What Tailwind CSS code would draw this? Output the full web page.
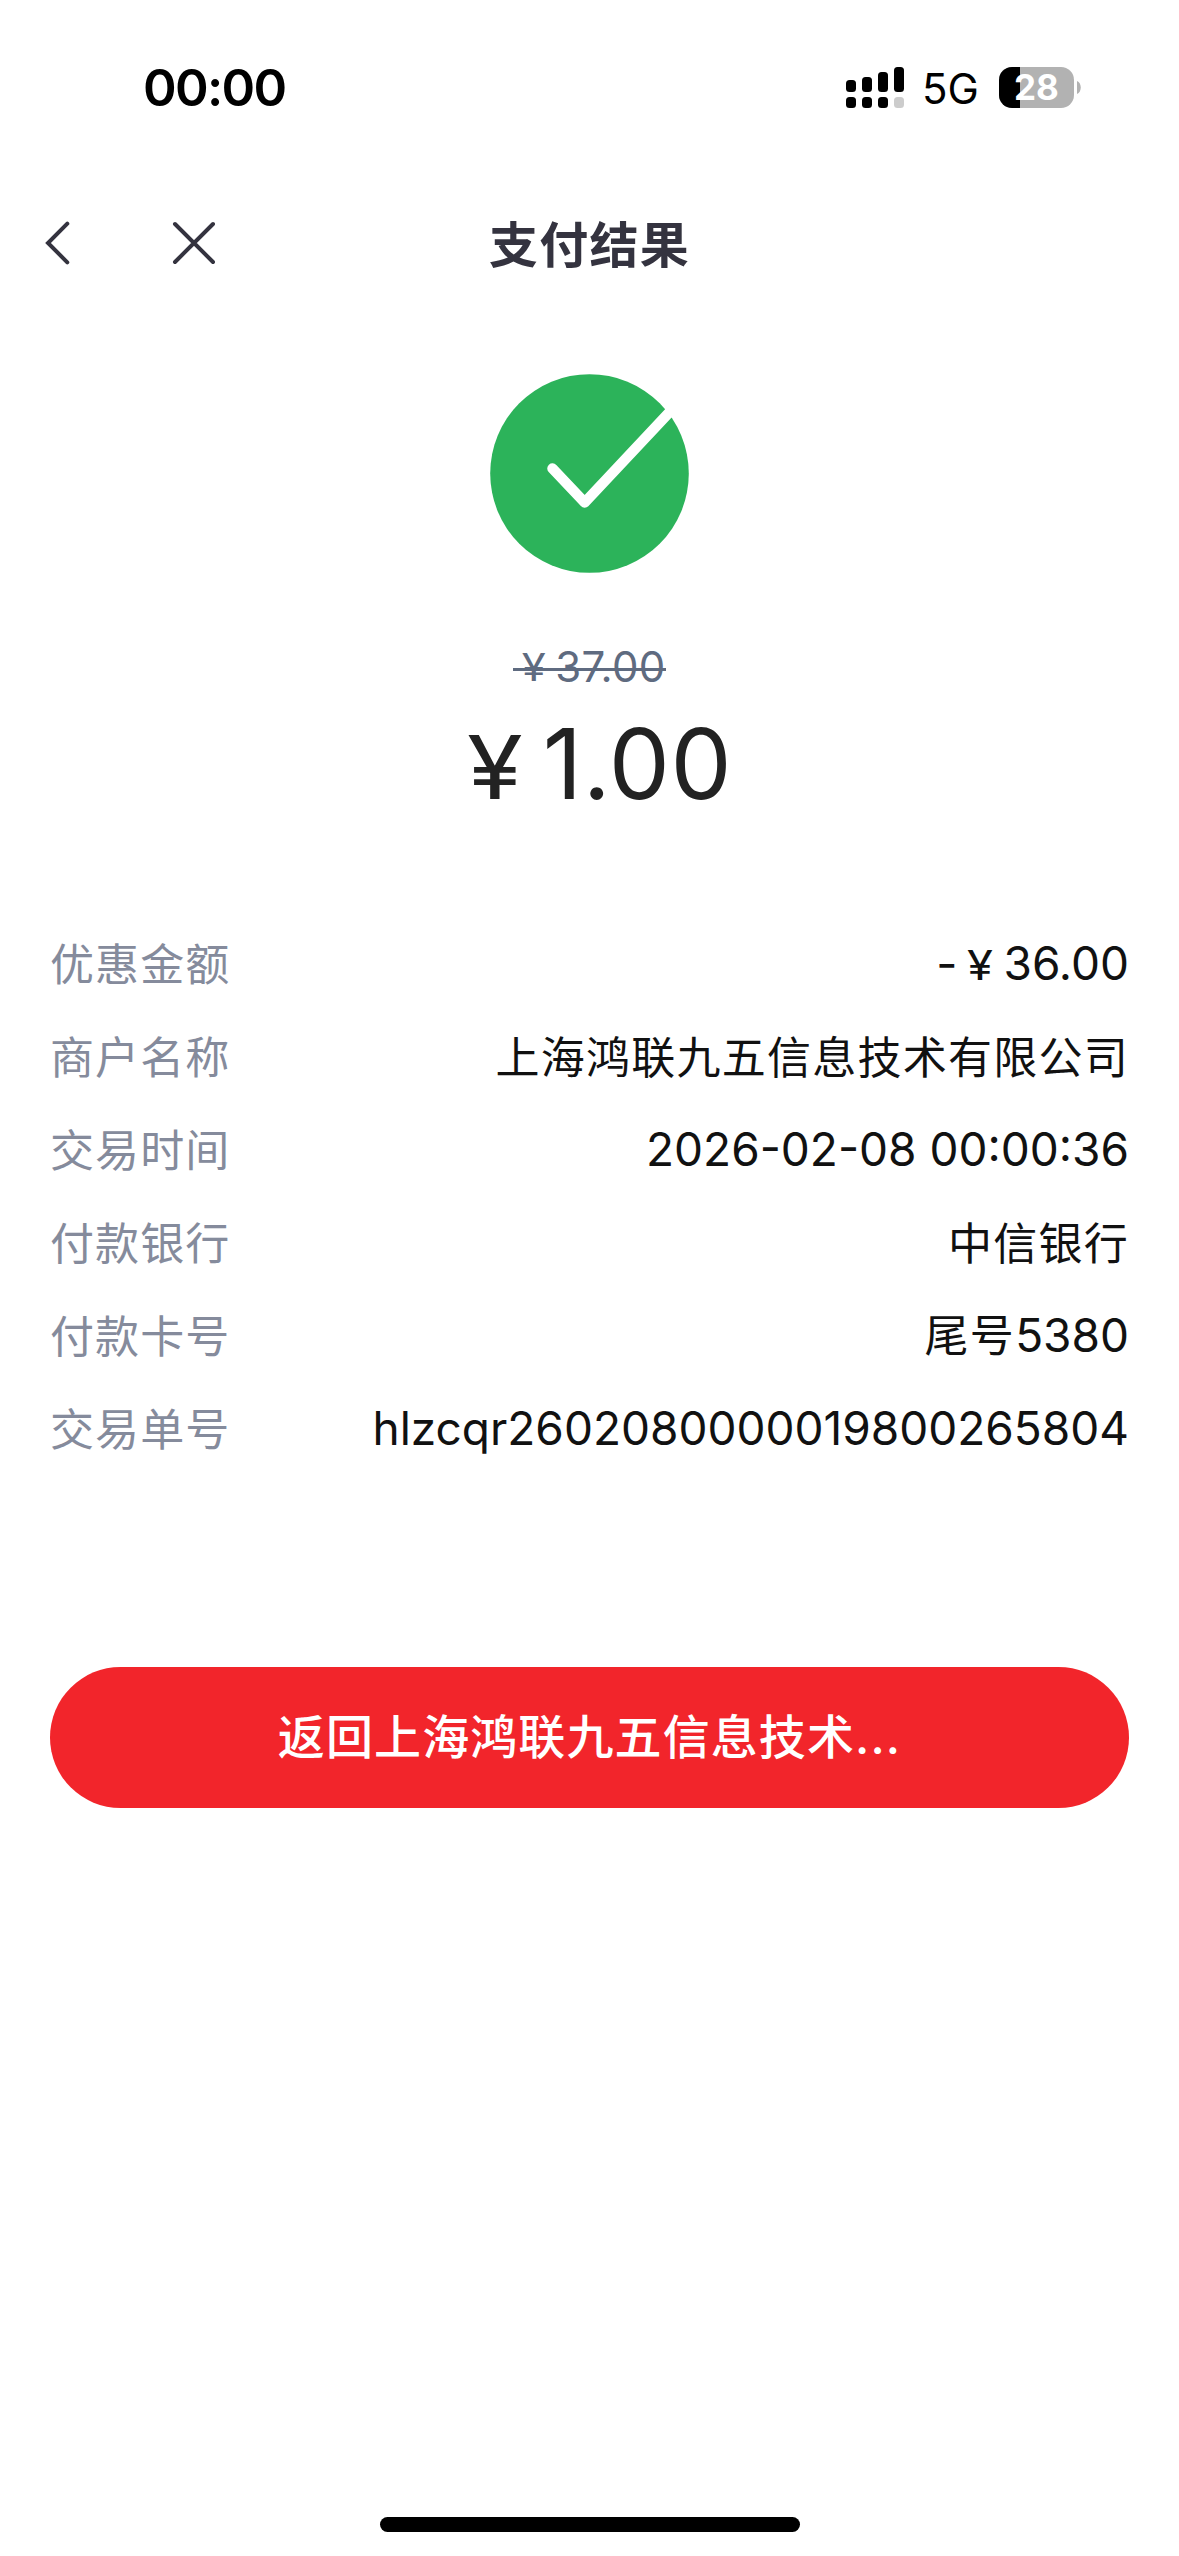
<!DOCTYPE html>
<html lang="zh-CN">
<head>
<meta charset="utf-8">
<meta name="viewport" content="width=device-width, initial-scale=1">
<title>支付结果</title>
<script src="https://cdn.jsdelivr.net/npm/@tailwindcss/browser@4"></script>
</head>
<body class="bg-white">
<div class="flex h-[2556px] w-[1179px] flex-col overflow-hidden bg-white font-['Inter','Noto_Sans_CJK_SC',sans-serif] text-[#111111]">
  <!-- status bar -->
  <div class="flex h-[175px] items-center justify-between pl-[143px] pr-[98px] text-black">
    <span class="text-[51px] leading-none font-semibold tracking-[-1.7px]">00:00</span>
    <div class="flex items-center">
      <svg class="h-[41px] w-[58px]" viewBox="0 0 58 41">
        <rect x="0" y="13" width="10" height="12" rx="3.5"/>
        <rect x="16" y="10" width="10" height="15" rx="3.5"/>
        <rect x="32" y="5" width="10" height="20" rx="3.5"/>
        <rect x="48" y="0" width="10" height="25" rx="3.5"/>
        <rect x="0" y="30" width="10" height="11" rx="3.5"/>
        <rect x="16" y="30" width="10" height="11" rx="3.5"/>
        <rect x="32" y="30" width="10" height="11" rx="3.5"/>
        <rect x="48" y="30" width="10" height="11" rx="3.5" fill="#cccccc"/>
      </svg>
      <span class="ml-[18px] w-[77px] pt-[3px] text-[42px] leading-none">5G</span>
      <div class="relative flex h-[41px] w-[75px] items-center justify-center overflow-hidden rounded-[13px] bg-[#b2b2b2]">
        <span class="absolute inset-y-0 left-0 w-[21px] bg-black"></span>
        <span class="relative text-[35px] leading-none font-bold text-white">28</span>
      </div>
      <svg class="ml-[3px] h-[13px] w-[4px]" viewBox="0 0 4 13"><path d="M0 0C5 2 5 11 0 13Z" fill="#b2b2b2"/></svg>
    </div>
  </div>

  <!-- navigation -->
  <div class="grid h-[136px] grid-cols-3 items-center">
    <div class="flex items-center pl-[45px]">
      <svg class="h-[44px] w-[26px]" viewBox="0 0 26 44" fill="none" stroke="#34333f" stroke-width="4" stroke-linecap="round"><path d="M22.3 2.7L3 22L22.3 41.3"/></svg>
      <svg class="ml-[101px] h-[44px] w-[44px]" viewBox="0 0 44 44" fill="none" stroke="#34333f" stroke-width="4" stroke-linecap="round"><path d="M3 3L41 41M41 3L3 41"/></svg>
    </div>
    <h1 class="pt-[4px] text-center text-[49px] leading-none font-bold tracking-[1.3px] text-[#34333f]">支付结果</h1>
  </div>

  <!-- result -->
  <div class="flex flex-col items-center pt-[63px]">
    <svg class="h-[199px] w-[199px]" viewBox="0 0 199 199">
      <circle cx="99.5" cy="99.5" r="99.3" fill="#2cb35a"/>
      <path d="M62.5 94.5L94.7 128.5L205 11" fill="none" stroke="#fff" stroke-width="10.5" stroke-linecap="round" stroke-linejoin="round"/>
    </svg>
    <p class="relative mt-[70px] flex h-[48px] items-center text-[42px] leading-none tracking-[0.4px] text-[#5f6b80]">
      <span class="w-[42px] scale-x-[1.15] text-center text-[38px]">¥</span><span>37.00</span>
      <span class="absolute inset-x-0 top-[25px] h-[3px] bg-[#5f6b80]"></span>
    </p>
    <p class="flex h-[145px] items-center text-[97px] leading-none tracking-[0.5px] text-[#222222]">
      <span class="flex items-baseline"><span class="w-[96px] scale-x-[1.15] text-center text-[88px]">¥</span><span>1.00</span></span>
    </p>
  </div>

  <!-- details -->
  <dl class="mt-[81px] flex flex-col px-[50px] text-[46px] leading-[93px]">
    <div class="flex h-[93px] justify-between"><dt class="text-[44px] leading-[97px] tracking-[1.1px] text-[#858b9c]">优惠金额</dt><dd class="flex items-baseline"><span>-</span><span class="w-[46px] scale-x-[1.15] text-center text-[41px]">¥</span><span>36.00</span></dd></div>
    <div class="flex h-[93px] justify-between"><dt class="text-[44px] leading-[97px] tracking-[1.1px] text-[#858b9c]">商户名称</dt><dd class="text-[44px] leading-[97px] tracking-[1.25px]">上海鸿联九五信息技术有限公司</dd></div>
    <div class="flex h-[93px] justify-between"><dt class="text-[44px] leading-[97px] tracking-[1.1px] text-[#858b9c]">交易时间</dt><dd>2026-02-08 00:00:36</dd></div>
    <div class="flex h-[93px] justify-between"><dt class="text-[44px] leading-[97px] tracking-[1.1px] text-[#858b9c]">付款银行</dt><dd class="text-[44px] leading-[97px] tracking-[1.25px]">中信银行</dd></div>
    <div class="flex h-[93px] justify-between"><dt class="text-[44px] leading-[97px] tracking-[1.1px] text-[#858b9c]">付款卡号</dt><dd><span class="text-[44px] tracking-[1.3px]">尾号</span>5380</dd></div>
    <div class="flex h-[93px] justify-between"><dt class="text-[44px] leading-[97px] tracking-[1.1px] text-[#858b9c]">交易单号</dt><dd>hlzcqr2602080000019800265804</dd></div>
  </dl>

  <button class="mx-[50px] mt-[192px] h-[141px] rounded-full bg-[#f2252b] pb-[2px] text-[47px] leading-none font-medium tracking-[1.1px] text-white">返回上海鸿联九五信息技术...</button>

  <div class="mx-auto mt-auto mb-[24px] h-[15px] w-[420px] rounded-full bg-black"></div>
</div>
</body>
</html>
